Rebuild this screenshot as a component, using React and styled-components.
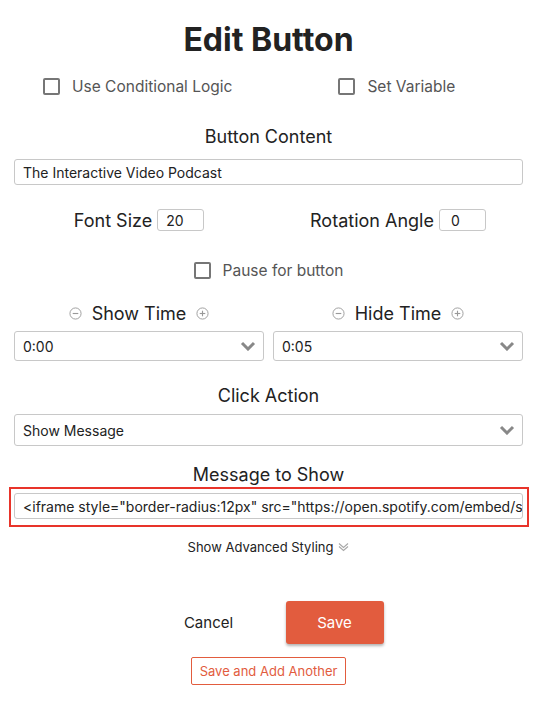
import React from 'react'
import styled, { createGlobalStyle } from 'styled-components'

const Global = createGlobalStyle`
  body {
    margin: 0;
    background: #ffffff;
    font-family: Inter, "Noto Sans", sans-serif;
    color: #222;
  }
`

const Page = styled.div`
  width: 542px;
  box-sizing: border-box;
  padding: 20px 19px 20px 14px;
`

const Title = styled.h1`
  margin: 0;
  font-size: 32px;
  line-height: 40px;
  font-weight: 700;
  text-align: center;
  color: #222;
`

const CheckRow = styled.div`
  display: flex;
  align-items: center;
  gap: 106px;
  padding-left: 29px;
  margin-top: 14px;
  height: 24px;
`

const CheckItem = styled.label`
  display: flex;
  align-items: center;
  gap: 12px;
  font-size: 15.5px;
  color: #555;
  justify-content: ${p => (p.center ? 'center' : 'flex-start')};
  margin-top: ${p => p.top || 0}px;
  height: 24px;
`

const Box = styled.span`
  width: 17px;
  height: 17px;
  box-sizing: border-box;
  border: 2px solid #767676;
  border-radius: 2px;
  display: inline-block;
`

const Heading = styled.div`
  text-align: center;
  font-size: 18px;
  line-height: 24px;
  color: #222;
  margin-top: ${p => p.top || 0}px;
`

const TextInput = styled.div`
  margin-top: ${p => p.top || 0}px;
  height: 26px;
  box-sizing: border-box;
  border: 1px solid #c8c8c8;
  border-radius: 3px;
  padding: 0 4px 0 8px;
  display: flex;
  align-items: center;
  font-size: 14px;
  color: #222;
  white-space: nowrap;
  overflow: hidden;
`

const Halves = styled.div`
  display: grid;
  grid-template-columns: 1fr 1fr;
  column-gap: 9px;
  margin-top: ${p => p.top || 0}px;
`

const InlineField = styled.div`
  display: flex;
  align-items: center;
  justify-content: center;
  gap: 5px;
  font-size: 18px;
  height: 24px;
`

const SmallInput = styled.div`
  width: 47px;
  height: 22px;
  box-sizing: border-box;
  border: 1px solid #c8c8c8;
  border-radius: 3px;
  padding-left: ${p => p.pad || 8}px;
  font-size: 14px;
  display: flex;
  align-items: center;
`

const Column = styled.div`
  display: flex;
  flex-direction: column;
`

const TimeHead = styled.div`
  display: flex;
  align-items: center;
  justify-content: center;
  gap: 10px;
  font-size: 18px;
  height: 24px;
  margin-bottom: 6px;
`

const Select = styled.div`
  height: ${p => p.h || 30}px;
  box-sizing: border-box;
  border: 1px solid #c8c8c8;
  border-radius: 3px;
  padding: 0 7px 0 8px;
  display: flex;
  align-items: center;
  justify-content: space-between;
  font-size: 14px;
  color: #222;
  margin-top: ${p => p.top || 0}px;
`

const Highlight = styled.div`
  margin: 0 -6px 0 -5px;
  border: 2px solid #e8342a;
  padding: 4px 4px 6px 3px;
`

const Advanced = styled.div`
  display: flex;
  align-items: center;
  justify-content: center;
  gap: 5px;
  font-size: 13px;
  line-height: 20px;
  color: #222;
  margin-top: 10px;
`

const ButtonRow = styled.div`
  display: flex;
  justify-content: center;
  align-items: center;
  gap: 28px;
  margin-top: 44px;
  padding-left: 6px;
`

const Cancel = styled.button`
  width: 98px;
  height: 43px;
  border: none;
  background: transparent;
  font-family: inherit;
  font-size: 15px;
  color: #222;
  cursor: pointer;
`

const Save = styled.button`
  width: 98px;
  height: 43px;
  border: none;
  border-radius: 3px;
  background: #e25c3e;
  color: #fff;
  font-family: inherit;
  font-size: 15px;
  box-shadow: 0 2px 3px rgba(0, 0, 0, 0.3);
  cursor: pointer;
`

const Another = styled.button`
  display: block;
  margin: 13px auto 0;
  height: 28px;
  padding: 0 8px;
  border: 1px solid #e25c3e;
  border-radius: 2px;
  background: #fff;
  color: #e25c3e;
  font-family: inherit;
  font-size: 13px;
  cursor: pointer;
`

const CircleIcon = ({ plus }) => (
  <svg width="13" height="13" viewBox="0 0 14 14">
    <circle cx="7" cy="7" r="6" fill="none" stroke="#999" strokeWidth="1" />
    <line x1="4" y1="7" x2="10" y2="7" stroke="#999" strokeWidth="1.2" />
    {plus && <line x1="7" y1="4" x2="7" y2="10" stroke="#999" strokeWidth="1.2" />}
  </svg>
)

const Chevron = () => (
  <svg width="16" height="10" viewBox="0 0 16 10">
    <polyline points="2,2 8,8 14,2" fill="none" stroke="#888" strokeWidth="3" />
  </svg>
)

const DoubleChevron = () => (
  <svg width="11" height="10" viewBox="0 0 11 10">
    <polyline points="1,1.5 5.5,5.5 10,1.5" fill="none" stroke="#a8a8a8" strokeWidth="1.1" />
    <polyline points="1,4.5 5.5,8.5 10,4.5" fill="none" stroke="#a8a8a8" strokeWidth="1.1" />
  </svg>
)

const TimeField = ({ label, value }) => (
  <Column>
    <TimeHead>
      <CircleIcon />
      {label}
      <CircleIcon plus />
    </TimeHead>
    <Select>
      {value}
      <Chevron />
    </Select>
  </Column>
)

export default function App() {
  return (
    <Page>
      <Global />
      <Title>Edit Button</Title>

      <CheckRow>
        <CheckItem><Box />Use Conditional Logic</CheckItem>
        <CheckItem><Box />Set Variable</CheckItem>
      </CheckRow>

      <Heading top={27}>Button Content</Heading>
      <TextInput top={10}>The Interactive Video Podcast</TextInput>

      <Halves top={23}>
        <InlineField>Font Size <SmallInput>20</SmallInput></InlineField>
        <InlineField>Rotation Angle <SmallInput pad={11}>0</SmallInput></InlineField>
      </Halves>

      <CheckItem center top={26}><Box />Pause for button</CheckItem>

      <Halves top={19}>
        <TimeField label="Show Time" value="0:00" />
        <TimeField label="Hide Time" value="0:05" />
      </Halves>

      <Heading top={23}>Click Action</Heading>
      <Select top={6} h={32}>
        Show Message
        <Chevron />
      </Select>

      <Heading top={17}>Message to Show</Heading>
      <Highlight>
        <TextInput>{'<iframe style="border-radius:12px" src="https://open.spotify.com/embed/s'}</TextInput>
      </Highlight>

      <Advanced>Show Advanced Styling <DoubleChevron /></Advanced>

      <ButtonRow>
        <Cancel>Cancel</Cancel>
        <Save>Save</Save>
      </ButtonRow>
      <Another>Save and Add Another</Another>
    </Page>
  )
}
